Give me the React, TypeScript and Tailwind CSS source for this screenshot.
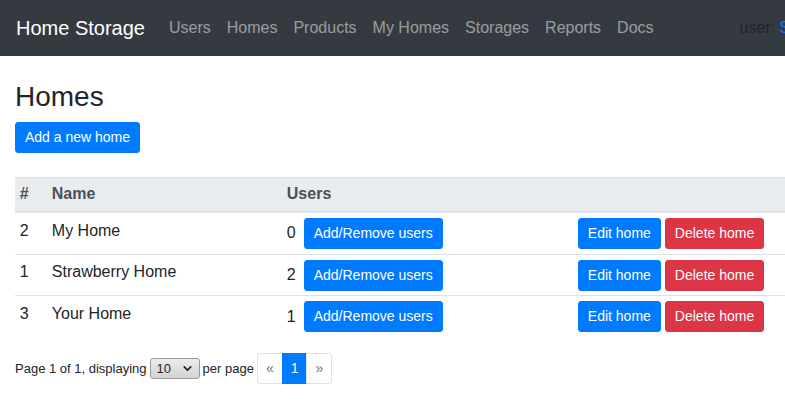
import { ChevronDown } from 'lucide-react';

const navLinks = ['Users', 'Homes', 'Products', 'My Homes', 'Storages', 'Reports', 'Docs'];

const homes = [
  { id: 2, name: 'My Home', users: 0 },
  { id: 1, name: 'Strawberry Home', users: 2 },
  { id: 3, name: 'Your Home', users: 1 },
];

const btn = 'inline-block px-[9px] py-1 text-sm leading-[21px] text-white border rounded-[3px] whitespace-nowrap';
const btnBlue = `${btn} bg-[#007bff] border-[#007bff]`;
const btnRed = `${btn} bg-[#dc3545] border-[#dc3545]`;

const App = () => {
  return (
    <div className="w-[785px] overflow-hidden bg-white text-[#212529] font-['Liberation_Sans',Arial,sans-serif]">
      {/* Navbar */}
      <nav className="flex items-center h-14 px-4 bg-[#343a40] whitespace-nowrap">
        <a className="text-xl leading-[30px] text-white mr-4">Home Storage</a>
        <ul className="flex items-center">
          {navLinks.map((l) => (
            <li key={l}>
              <a className="block px-2 py-2 text-base leading-6 text-[rgba(255,255,255,0.5)]">{l}</a>
            </li>
          ))}
        </ul>
        <span className="ml-[78px] text-base leading-6 text-[#212529]">
          user: <a className="text-[#007bff]">Someone</a>
        </span>
      </nav>

      {/* Content */}
      <div className="px-[15px]">
        <h1 className="mt-6 mb-2 text-[28px] leading-[1.2] font-normal">Homes</h1>
        <button className={btnBlue}>Add a new home</button>

        <table className="mt-6 w-[800px] table-fixed border-collapse text-base leading-6">
          <thead>
            <tr className="bg-[#e9ecef] text-[#495057]">
              <th className="w-[32px] text-left font-bold px-[4.8px] py-[4.8px] border-t border-[#dee2e6] border-b-2">#</th>
              <th className="w-[235px] text-left font-bold px-[4.8px] py-[4.8px] border-t border-[#dee2e6] border-b-2">Name</th>
              <th className="w-[291px] text-left font-bold px-[4.8px] py-[4.8px] border-t border-[#dee2e6] border-b-2">Users</th>
              <th className="px-[4.8px] py-[4.8px] border-t border-[#dee2e6] border-b-2"></th>
            </tr>
          </thead>
          <tbody>
            {homes.map((h) => (
              <tr key={h.id}>
                <td className="align-top px-[4.8px] pt-[5.5px] pb-[4.8px] border-t border-[#dee2e6]">{h.id}</td>
                <td className="align-top px-[4.8px] pt-[5.5px] pb-[4.8px] border-t border-[#dee2e6]">{h.name}</td>
                <td className="align-top px-[4.8px] py-[4.8px] border-t border-[#dee2e6]">
                  <div className="flex items-center gap-2">
                    <span>{h.users}</span>
                    <button className={btnBlue}>Add/Remove users</button>
                  </div>
                </td>
                <td className="align-top px-[4.8px] py-[4.8px] border-t border-[#dee2e6]">
                  <div className="flex items-center gap-1">
                    <button className={btnBlue}>Edit home</button>
                    <button className={btnRed}>Delete home</button>
                  </div>
                </td>
              </tr>
            ))}
          </tbody>
        </table>

        {/* Pagination */}
        <div className="mt-4 flex items-center gap-[3px] text-[13px] whitespace-nowrap">
          <span>Page 1 of 1, displaying</span>
          <div className="relative">
            <select
              defaultValue="10"
              className="appearance-none w-[50px] h-[21px] pl-[6px] text-[13px] leading-[19px] text-[#212529] rounded-[3px] border border-[#9a9a9a] bg-linear-to-b from-[#ececec] to-[#d3d3d3]"
            >
              <option value="10">10</option>
              <option value="25">25</option>
              <option value="50">50</option>
            </select>
            <ChevronDown size={13} strokeWidth={3} className="pointer-events-none absolute right-[6px] top-[4px] text-[#222]" />
          </div>
          <span>per page</span>
          <ul className="flex text-sm leading-[21px]">
            <li className="px-2 py-1 border border-[#dee2e6] rounded-l-[3px] text-[#6c757d]">«</li>
            <li className="px-2 py-1 border border-[#007bff] bg-[#007bff] text-white -ml-px">1</li>
            <li className="px-2 py-1 border border-[#dee2e6] rounded-r-[3px] text-[#6c757d] -ml-px">»</li>
          </ul>
        </div>
      </div>
    </div>
  );
};

export default App;
